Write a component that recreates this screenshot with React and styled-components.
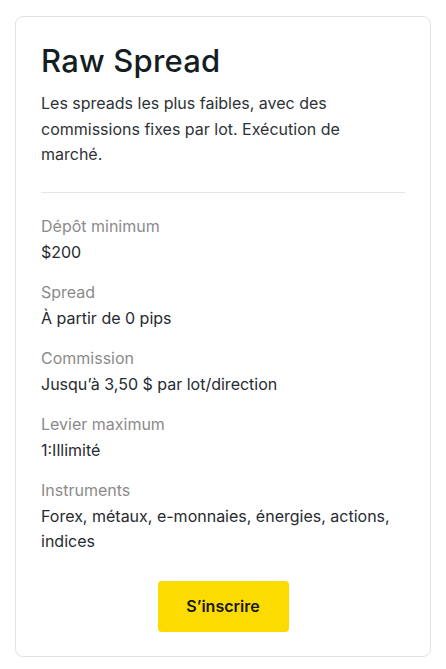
import styled, { createGlobalStyle } from "styled-components";

const GlobalStyle = createGlobalStyle`
  html, body {
    margin: 0;
    padding: 0;
    background: #fff;
  }
  body {
    font-family: Inter, "Liberation Sans", sans-serif;
  }
`;

const Page = styled.div`
  padding: 16px 15px 12px 15px;
`;

const Card = styled.div`
  width: 416px;
  box-sizing: border-box;
  border: 1px solid #e3e3e3;
  border-radius: 8px;
  padding: 24px 25px 24px 25px;
  background: #fff;
`;

const Title = styled.h2`
  margin: 0 0 10px;
  font-family: Inter, "Open Sans", sans-serif;
  font-weight: 500;
  font-size: 31px;
  line-height: 40px;
  letter-spacing: 0.2px;
  color: #141d22;
`;

const Desc = styled.p`
  margin: 0;
  font-size: 16px;
  line-height: 25.5px;
  color: #2d3236;
`;

const Divider = styled.hr`
  border: none;
  border-top: 1px solid #e6e6e6;
  margin: 24px 0 20px;
`;

const Specs = styled.dl`
  margin: 0;
  display: flex;
  flex-direction: column;
  gap: 14px;
`;

const Spec = styled.div`
  display: flex;
  flex-direction: column;
`;

const Label = styled.dt`
  font-size: 16px;
  line-height: 27px;
  color: #8b8b8b;
`;

const Value = styled.dd`
  margin: 0;
  font-size: 16px;
  line-height: 25px;
  color: #262b2f;
`;

const Actions = styled.div`
  display: flex;
  justify-content: center;
  margin-top: 27px;
`;

const Button = styled.button`
  width: 131px;
  height: 51px;
  border: none;
  border-radius: 4px;
  background: #fcdc00;
  font-family: Inter, "Liberation Sans", sans-serif;
  font-weight: 600;
  font-size: 16px;
  color: #171717;
  cursor: pointer;
`;

const specs = [
  { label: "Dépôt minimum", value: "$200" },
  { label: "Spread", value: "À partir de 0 pips" },
  { label: "Commission", value: "Jusqu’à 3,50 $ par lot/direction" },
  { label: "Levier maximum", value: "1:Illimité" },
  { label: "Instruments", value: "Forex, métaux, e-monnaies, énergies, actions, indices" },
];

export default function App() {
  return (
    <Page>
      <GlobalStyle />
      <Card>
        <Title>Raw Spread</Title>
        <Desc>
          Les spreads les plus faibles, avec des commissions fixes par lot.
          Exécution de marché.
        </Desc>
        <Divider />
        <Specs>
          {specs.map((s) => (
            <Spec key={s.label}>
              <Label>{s.label}</Label>
              <Value>{s.value}</Value>
            </Spec>
          ))}
        </Specs>
        <Actions>
          <Button>S’inscrire</Button>
        </Actions>
      </Card>
    </Page>
  );
}
